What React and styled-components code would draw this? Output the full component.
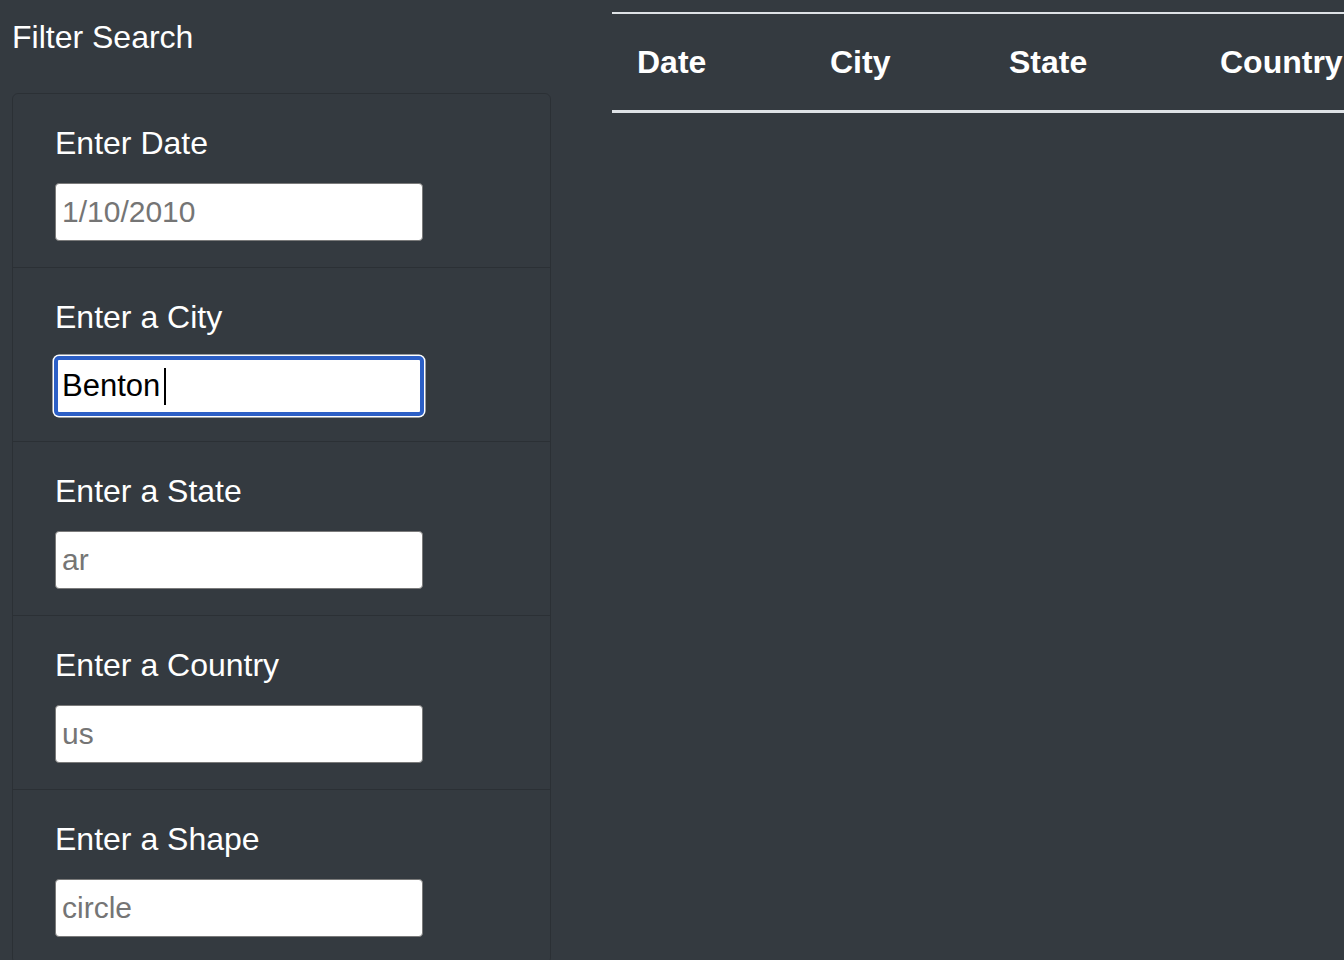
import React from 'react';
import styled, { createGlobalStyle } from 'styled-components';

const GlobalStyle = createGlobalStyle`
  html, body {
    margin: 0;
    padding: 0;
    background: #343a40;
    overflow: hidden;
  }
  body {
    font-family: 'Liberation Sans', Arial, Helvetica, sans-serif;
    color: #fff;
  }
`;

const Page = styled.div`
  display: grid;
  grid-template-columns: 600px 744px;
  width: 1344px;
  height: 960px;
  overflow: hidden;
`;

const Sidebar = styled.aside`
  padding: 18px 12px 0;
`;

const Heading = styled.div`
  font-size: 32px;
  line-height: 38px;
  margin-bottom: 37px;
`;

const Panel = styled.div`
  width: 539px;
  box-sizing: border-box;
  border: 1px solid rgba(0, 0, 0, 0.16);
  border-radius: 6px;
`;

const Field = styled.div`
  padding: 30px 42px 26px;
  border-top: ${(p) => (p.first ? 'none' : '1px solid rgba(0, 0, 0, 0.16)')};
`;

const Label = styled.label`
  display: block;
  font-size: 32px;
  line-height: 38px;
  margin-bottom: 21px;
`;

const InputWrap = styled.div`
  position: relative;
  width: 368px;
`;

const Input = styled.input`
  display: block;
  box-sizing: border-box;
  width: 368px;
  height: 58px;
  margin: 0;
  padding: 0 0 0 ${(p) => (p.focused ? '4px' : '6px')};
  font-family: 'Liberation Sans', Arial, sans-serif;
  font-size: 31px;
  color: #000;
  background: #fff;
  border: ${(p) => (p.focused ? '3px solid #2c5fc6' : '1px solid #7a7a7a')};
  border-radius: 4px;
  outline: none;
  box-shadow: ${(p) =>
    p.focused ? '0 0 0 1px #2c5fc6, 0 0 0 2.5px #fff' : 'none'};

  &::placeholder {
    color: #757575;
    opacity: 1;
    font-size: 30px;
  }
`;

const Caret = styled.span`
  position: absolute;
  left: 109px;
  top: 11px;
  width: 1.5px;
  height: 37px;
  background: #000;
`;

const Main = styled.main`
  padding: 12px 0 0 12px;
  overflow: hidden;
  min-width: 0;
`;

const Table = styled.table`
  border-collapse: collapse;
  table-layout: fixed;
  width: ${(p) => p.w}px;
  border-top: 2px solid #dee2e6;
`;

const Th = styled.th`
  box-sizing: border-box;
  width: ${(p) => p.w}px;
  text-align: left;
  font-size: 32px;
  font-weight: 700;
  line-height: 38px;
  color: #fff;
  padding: 29px 0 29px 25px;
  border-bottom: 3px solid #dee2e6;
  white-space: nowrap;
  overflow: hidden;
`;

const fields = [
  { label: 'Enter Date', placeholder: '1/10/2010' },
  { label: 'Enter a City', value: 'Benton', focused: true },
  { label: 'Enter a State', placeholder: 'ar' },
  { label: 'Enter a Country', placeholder: 'us' },
  { label: 'Enter a Shape', placeholder: 'circle' },
];

const columns = [
  { name: 'Date', w: 193 },
  { name: 'City', w: 179 },
  { name: 'State', w: 211 },
  { name: 'Country', w: 260 },
];

const tableWidth = columns.reduce((sum, c) => sum + c.w, 0);

const App = () => {
  return (
    <>
      <GlobalStyle />
      <Page>
        <Sidebar>
          <Heading>Filter Search</Heading>
          <Panel>
            {fields.map((f, i) => (
              <Field key={f.label} first={i === 0}>
                <Label>{f.label}</Label>
                <InputWrap>
                  <Input
                    type="text"
                    placeholder={f.placeholder}
                    defaultValue={f.value}
                    focused={f.focused}
                  />
                  {f.focused && <Caret />}
                </InputWrap>
              </Field>
            ))}
          </Panel>
        </Sidebar>

        <Main>
          <Table w={tableWidth}>
            <thead>
              <tr>
                {columns.map((c) => (
                  <Th key={c.name} w={c.w}>
                    {c.name}
                  </Th>
                ))}
              </tr>
            </thead>
            <tbody></tbody>
          </Table>
        </Main>
      </Page>
    </>
  );
};

export default App;
